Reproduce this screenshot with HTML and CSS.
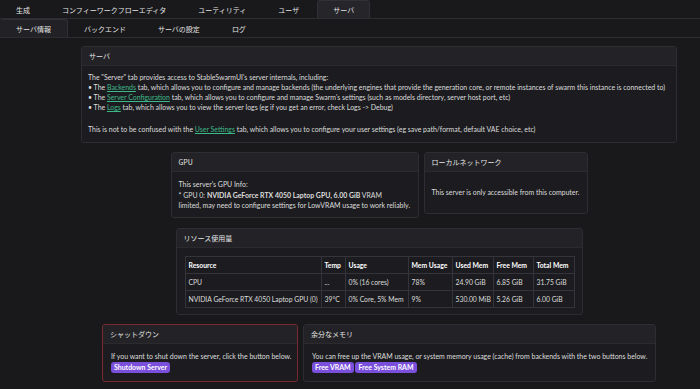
FILE: index.html
```html
<!DOCTYPE html>
<html lang="ja">
<head>
<meta charset="utf-8">
<title>Server</title>
<link rel="stylesheet" href="styles.css">
</head>
<body>
<nav class="tabs tabs-top">
  <span class="tab">生成</span>
  <span class="tab">コンフィーワークフローエディタ</span>
  <span class="tab">ユーティリティ</span>
  <span class="tab">ユーザ</span>
  <span class="tab active">サーバ</span>
</nav>
<nav class="tabs tabs-sub">
  <span class="tab active">サーバ情報</span>
  <span class="tab">バックエンド</span>
  <span class="tab">サーバの設定</span>
  <span class="tab">ログ</span>
</nav>
<main class="content">
  <div class="row">
    <section class="card card-intro">
      <div class="card-header">サーバ</div>
      <div class="card-body intro-body">
        <p>The "Server" tab provides access to StableSwarmUI's server internals, including:<br>
        • The <a class="link">Backends</a> tab, which allows you to configure and manage backends (the underlying engines that provide the generation core, or remote instances of swarm this instance is connected to)<br>
        • The <a class="link">Server Configuration</a> tab, which allows you to configure and manage Swarm's settings (such as models directory, server host port, etc)<br>
        • The <a class="link">Logs</a> tab, which allows you to view the server logs (eg if you get an error, check Logs -&gt; Debug)</p>
        <p class="intro-note">This is not to be confused with the <a class="link">User Settings</a> tab, which allows you to configure your user settings (eg save path/format, default VAE choice, etc)</p>
      </div>
    </section>
  </div>
  <div class="row">
    <section class="card card-gpu">
      <div class="card-header">GPU</div>
      <div class="card-body gpu-body">
        This server's GPU Info:<br>
        * GPU 0: <b>NVIDIA GeForce RTX 4050 Laptop GPU, 6.00 GiB</b> VRAM<br>
        limited, may need to configure settings for LowVRAM usage to work reliably.
      </div>
    </section>
    <section class="card card-lan">
      <div class="card-header">ローカルネットワーク</div>
      <div class="card-body lan-body">This server is only accessible from this computer.</div>
    </section>
  </div>
  <div class="row">
    <section class="card card-res">
      <div class="card-header">リソース使用量</div>
      <div class="card-body res-body">
        <table class="res-table">
          <colgroup>
            <col class="c-res"><col class="c-temp"><col class="c-usage"><col class="c-memu"><col class="c-used"><col class="c-free"><col class="c-total">
          </colgroup>
          <tr><th>Resource</th><th>Temp</th><th>Usage</th><th>Mem Usage</th><th>Used Mem</th><th>Free Mem</th><th>Total Mem</th></tr>
          <tr><td>CPU</td><td>...</td><td>0% (16 cores)</td><td>78%</td><td>24.90 GiB</td><td>6.85 GiB</td><td>31.75 GiB</td></tr>
          <tr><td>NVIDIA GeForce RTX 4050 Laptop GPU (0)</td><td>39°C</td><td>0% Core, 5% Mem</td><td>9%</td><td>530.00 MiB</td><td>5.26 GiB</td><td>6.00 GiB</td></tr>
        </table>
      </div>
    </section>
  </div>
  <div class="row">
    <section class="card card-shutdown">
      <div class="card-header">シャットダウン</div>
      <div class="card-body btn-body">
        If you want to shut down the server, click the button below.<br>
        <button class="btn">Shutdown Server</button>
      </div>
    </section>
    <section class="card card-mem">
      <div class="card-header">余分なメモリ</div>
      <div class="card-body btn-body">
        You can free up the VRAM usage, or system memory usage (cache) from backends with the two buttons below.<br>
        <button class="btn">Free VRAM</button> <button class="btn">Free System RAM</button>
      </div>
    </section>
  </div>
</main>
</body>
</html>
```

FILE: styles.css
```css
* { box-sizing: border-box; }
html, body {
  margin: 0;
  padding: 0;
  background: #19191c;
  color: #dcdcdc;
  font-family: "Lato", "Noto Sans CJK JP", sans-serif;
  font-size: 6.95px;
  line-height: 10px;
  overflow: hidden;
}
p { margin: 0; }

.tabs {
  display: flex;
  align-items: flex-end;
  border-bottom: 1px solid #2c2c31;
}
.tabs-top { height: 19px; }
.tabs-sub { height: 19px; }
.tab {
  padding: 0 15px;
  height: 18px;
  line-height: 18px;
  color: #e4e4e4;
  font-family: "Noto Sans CJK JP", sans-serif;
  font-size: 7px;
  border: 1px solid transparent;
  border-bottom: none;
  border-radius: 3px 3px 0 0;
  white-space: nowrap;
}
.tabs-top .tab.active {
  margin-left: 2px;
  padding: 0 15px;
  background: #25252a;
  border-color: #303036;
}
.tabs-sub .tab.active {
  background: #222226;
  border-color: #303036;
  padding: 0 16px;
  border-left: none;
}

.content {
  padding: 8px 0 0 58px;
  display: flex;
  flex-direction: column;
  gap: 9px;
}
.row {
  display: flex;
  justify-content: center;
  align-items: flex-start;
  gap: 5px;
}
.card {
  background: #1c1c20;
  border: 1px solid #2d2d32;
  border-radius: 3px;
  overflow: hidden;
  white-space: nowrap;
}
.card-header {
  height: 19px;
  line-height: 18px;
  padding: 0 7px;
  background: #232327;
  border-bottom: 1px solid #2a2a2f;
  color: #e6e6e6;
  font-family: "Noto Sans CJK JP", sans-serif;
  font-size: 7px;
}
.card-body { padding: 6px 7px 8px; }
.link { color: #3db887; text-decoration: underline; }

.card-intro { width: 596px; }
.intro-body { padding: 6px 6px 8px; }
.intro-note { margin-top: 12px; }

.card-gpu { width: 248px; }
.gpu-body { padding: 7px 7px 6px; line-height: 10.5px; }
.card-lan { width: 164px; }
.lan-body { padding: 15px 7px 16px; }

.card-res { width: 407px; margin-top: 1px; }
.res-body { padding: 8px 8px 6px; }
.res-table {
  border-collapse: collapse;
  table-layout: fixed;
  width: 389px;
  font-size: 6.8px;
}
.res-table th, .res-table td {
  border: 1px solid #34343a;
  padding: 0 2px 0 3px;
  height: 17px;
  text-align: left;
  white-space: nowrap;
  overflow: hidden;
}
.res-table th { color: #ffffff; font-weight: 700; }
.c-res { width: 136px; }
.c-temp { width: 24px; }
.c-usage { width: 63px; }
.c-memu { width: 44px; }
.c-used { width: 41px; }
.c-free { width: 40px; }
.c-total { width: 41px; }

.card-shutdown { width: 196px; border-color: #7a2a2e; }
.card-mem { width: 353px; }
.btn-body { padding: 7px 8px 8px; }
.btn {
  margin-top: 1px;
  font-family: "Lato", sans-serif;
  font-size: 6.95px;
  font-weight: 700;
  color: #ffffff;
  background: #7a4fdc;
  border: none;
  border-radius: 3px;
  padding: 0 3px;
  height: 11px;
  line-height: 11px;
}
```
